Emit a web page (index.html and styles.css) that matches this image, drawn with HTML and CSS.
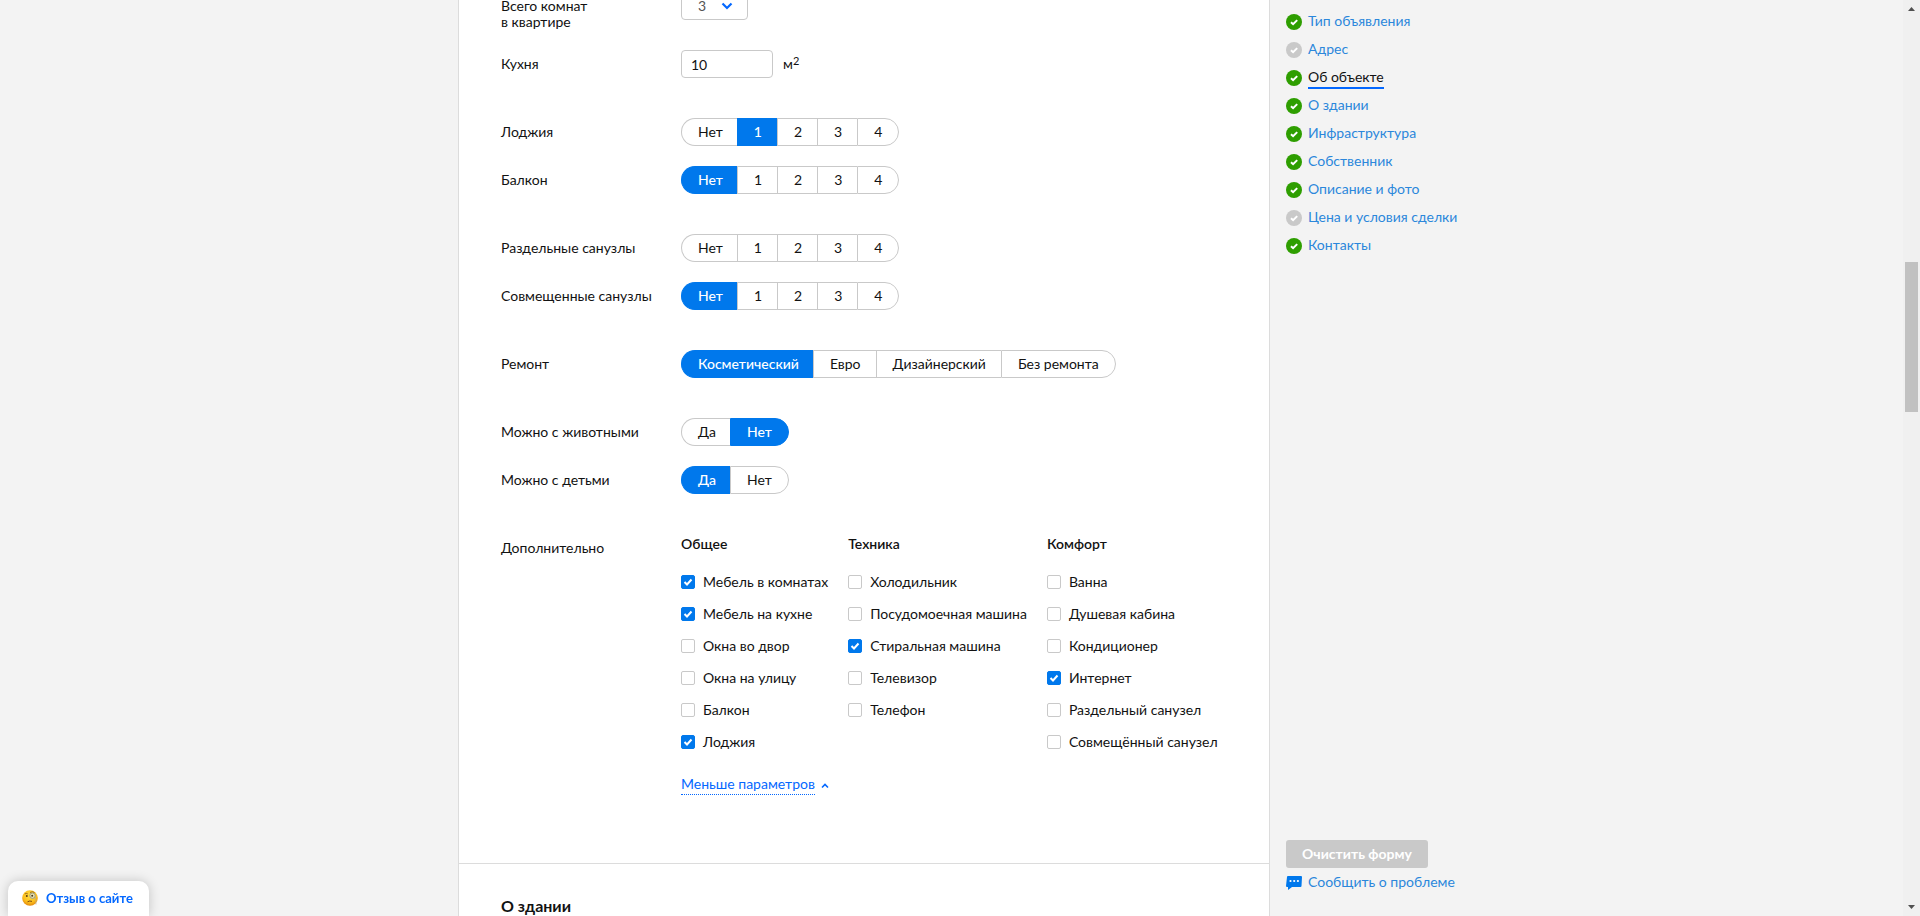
FILE: index.html
```html
<!DOCTYPE html>
<html lang="ru">
<head>
<meta charset="utf-8">
<title>Новое объявление</title>
<link rel="stylesheet" href="styles.css">
</head>
<body>
<svg class="sprite" aria-hidden="true">
  <symbol id="check" viewBox="0 0 16 16">
    <circle cx="8" cy="8" r="8"/>
    <path d="M5 8.2l2.1 2L11.2 6.1" fill="none" stroke="#fff" stroke-width="2"/>
  </symbol>
</svg>
<div class="window">
  <div class="page">
    <main class="form">
      <form class="section" id="object">
        <div class="group">
          <div class="row">
            <label class="row-label" for="rooms">Всего комнат<br>в квартире</label>
            <div class="select-wrap">
              <select class="select" id="rooms"><option>1</option><option>2</option><option selected>3</option><option>4</option></select>
              <svg class="select-arrow" viewBox="0 0 12 8"><path d="M1.500 1.500L6 6l4.500-4.500" fill="none" stroke="#0468ff" stroke-width="2.200"/></svg>
            </div>
          </div>
          <div class="row">
            <label class="row-label" for="kitchen">Кухня</label>
            <div class="measure"><input class="input" id="kitchen" type="text" value="10"><span>м<sup>2</sup></span></div>
          </div>
        </div>
        <div class="group">
          <div class="row">
            <span class="row-label" id="l-loggia">Лоджия</span>
            <div class="pills" role="radiogroup" aria-labelledby="l-loggia">
              <label><input type="radio" name="loggia">Нет</label><label><input type="radio" name="loggia" checked>1</label><label><input type="radio" name="loggia">2</label><label><input type="radio" name="loggia">3</label><label><input type="radio" name="loggia">4</label>
            </div>
          </div>
          <div class="row">
            <span class="row-label" id="l-balcony">Балкон</span>
            <div class="pills" role="radiogroup" aria-labelledby="l-balcony">
              <label><input type="radio" name="balcony" checked>Нет</label><label><input type="radio" name="balcony">1</label><label><input type="radio" name="balcony">2</label><label><input type="radio" name="balcony">3</label><label><input type="radio" name="balcony">4</label>
            </div>
          </div>
        </div>
        <div class="group">
          <div class="row">
            <span class="row-label" id="l-sep">Раздельные санузлы</span>
            <div class="pills" role="radiogroup" aria-labelledby="l-sep">
              <label><input type="radio" name="sep">Нет</label><label><input type="radio" name="sep">1</label><label><input type="radio" name="sep">2</label><label><input type="radio" name="sep">3</label><label><input type="radio" name="sep">4</label>
            </div>
          </div>
          <div class="row">
            <span class="row-label" id="l-comb">Совмещенные санузлы</span>
            <div class="pills" role="radiogroup" aria-labelledby="l-comb">
              <label><input type="radio" name="comb" checked>Нет</label><label><input type="radio" name="comb">1</label><label><input type="radio" name="comb">2</label><label><input type="radio" name="comb">3</label><label><input type="radio" name="comb">4</label>
            </div>
          </div>
        </div>
        <div class="group">
          <div class="row">
            <span class="row-label" id="l-repair">Ремонт</span>
            <div class="pills" role="radiogroup" aria-labelledby="l-repair">
              <label><input type="radio" name="repair" checked>Косметический</label><label><input type="radio" name="repair">Евро</label><label><input type="radio" name="repair">Дизайнерский</label><label><input type="radio" name="repair">Без ремонта</label>
            </div>
          </div>
        </div>
        <div class="group">
          <div class="row">
            <span class="row-label" id="l-pets">Можно с животными</span>
            <div class="pills" role="radiogroup" aria-labelledby="l-pets">
              <label><input type="radio" name="pets">Да</label><label><input type="radio" name="pets" checked>Нет</label>
            </div>
          </div>
          <div class="row">
            <span class="row-label" id="l-kids">Можно с детьми</span>
            <div class="pills" role="radiogroup" aria-labelledby="l-kids">
              <label><input type="radio" name="kids" checked>Да</label><label><input type="radio" name="kids">Нет</label>
            </div>
          </div>
        </div>
        <div class="group">
          <div class="row">
            <span class="row-label">Дополнительно</span>
            <div class="extras">
              <div class="columns">
                <fieldset class="column">
                  <legend>Общее</legend>
                  <label><input type="checkbox" checked>Мебель в комнатах</label>
                  <label><input type="checkbox" checked>Мебель на кухне</label>
                  <label><input type="checkbox">Окна во двор</label>
                  <label><input type="checkbox">Окна на улицу</label>
                  <label><input type="checkbox">Балкон</label>
                  <label><input type="checkbox" checked>Лоджия</label>
                </fieldset>
                <fieldset class="column">
                  <legend>Техника</legend>
                  <label><input type="checkbox">Холодильник</label>
                  <label><input type="checkbox">Посудомоечная машина</label>
                  <label><input type="checkbox" checked>Стиральная машина</label>
                  <label><input type="checkbox">Телевизор</label>
                  <label><input type="checkbox">Телефон</label>
                </fieldset>
                <fieldset class="column">
                  <legend>Комфорт</legend>
                  <label><input type="checkbox">Ванна</label>
                  <label><input type="checkbox">Душевая кабина</label>
                  <label><input type="checkbox">Кондиционер</label>
                  <label><input type="checkbox" checked>Интернет</label>
                  <label><input type="checkbox">Раздельный санузел</label>
                  <label><input type="checkbox">Совмещённый санузел</label>
                </fieldset>
              </div>
              <button class="less" type="button"><span>Меньше параметров</span><svg viewBox="0 0 8 6"><path d="M1 4.500l3-3 3 3" fill="none" stroke="#0468ff" stroke-width="1.600"/></svg></button>
            </div>
          </div>
        </div>
      </form>
      <section class="next" id="building"><h2>О здании</h2></section>
    </main>
    <aside class="sidebar">
      <nav class="steps">
        <a href="#type"><svg class="done"><use href="#check"/></svg><span>Тип объявления</span></a>
        <a href="#address"><svg class="todo"><use href="#check"/></svg><span>Адрес</span></a>
        <a href="#object" class="current"><svg class="done"><use href="#check"/></svg><span>Об объекте</span></a>
        <a href="#building"><svg class="done"><use href="#check"/></svg><span>О здании</span></a>
        <a href="#infra"><svg class="done"><use href="#check"/></svg><span>Инфраструктура</span></a>
        <a href="#owner"><svg class="done"><use href="#check"/></svg><span>Собственник</span></a>
        <a href="#photo"><svg class="done"><use href="#check"/></svg><span>Описание и фото</span></a>
        <a href="#price"><svg class="todo"><use href="#check"/></svg><span>Цена и условия сделки</span></a>
        <a href="#contacts"><svg class="done"><use href="#check"/></svg><span>Контакты</span></a>
      </nav>
      <div class="actions">
        <button class="clear" type="button">Очистить форму</button>
        <a class="report" href="#report"><svg viewBox="0 0 16 16"><path d="M2 2h13a1 1 0 0 1 1 1l-.5 9a1 1 0 0 1-1 1H6l-4 3V13H1a1 1 0 0 1-1-1L1 3a1 1 0 0 1 1-1z" fill="#0078ec"/><g fill="#fff"><circle cx="4.500" cy="7" r="1.100"/><circle cx="8.200" cy="7" r="1.100"/><circle cx="11.900" cy="7" r="1.100"/></g></svg><span>Сообщить о проблеме</span></a>
      </div>
    </aside>
  </div>
  <div class="scrollbar" aria-hidden="true">
    <svg viewBox="0 0 17 17"><path d="M5 11h7L8.500 7z" fill="#505050"/></svg>
    <div class="thumb"></div>
    <svg viewBox="0 0 17 17"><path d="M5 6h7L8.500 10z" fill="#505050"/></svg>
  </div>
</div>
<button class="feedback" type="button">
  <svg viewBox="0 0 16 16">
    <defs><radialGradient id="face" cx=".5" cy=".35" r=".65"><stop offset="0" stop-color="#ffe04a"/><stop offset=".65" stop-color="#fcbf1c"/><stop offset="1" stop-color="#e2870c"/></radialGradient></defs>
    <circle cx="8" cy="8" r="7.800" fill="url(#face)"/>
    <circle cx="4.800" cy="6" r="1" fill="#5a3a12"/>
    <path d="M2.800 3.900q1.500-1 3 0M8 2.500q2.500-1.500 4.500 0" fill="none" stroke="#8a5a12" stroke-width=".8"/>
    <circle cx="10.500" cy="5.700" r="2.700" fill="#e8ebdc" fill-opacity=".7" stroke="#8f9388" stroke-width=".9"/>
    <circle cx="10.200" cy="5.800" r="1" fill="#4a3a20"/>
    <path d="M13.200 6.500q1 4 .8 8" fill="none" stroke="#b9ad8c" stroke-width=".7"/>
    <path d="M5.500 11.800q2.200-1.400 4.500-.4" fill="none" stroke="#7a4510" stroke-width="1"/>
  </svg>
  <span>Отзыв о сайте</span>
</button>
</body>
</html>
```
FILE: styles.css
```css
* { box-sizing: border-box; }

body {
  margin: 0;
  background: #f3f3f3;
  color: #121212;
  font: 14px/16px Lato, "Noto Sans", sans-serif;
}

button, input, select { font: inherit; color: inherit; }
.sprite { display: none; }

.window { display: flex; height: 100vh; overflow: hidden; }

.page {
  flex: 1;
  display: flex;
  justify-content: center;
  min-width: 0;
}

.form {
  width: 812px;
  background: #fff;
  border: solid #dcdcdc;
  border-width: 0 1px;
}

/* The form is scrolled: its first row is partly above the window */
.section {
  display: flex;
  flex-direction: column;
  gap: 40px;
  margin-top: -8px;
  padding: 0 40px 68px 42px;
}

.group { display: flex; flex-direction: column; gap: 20px; }
.row { display: flex; align-items: flex-start; }
.row-label { flex: none; width: 180px; padding-top: 6px; }

.select-wrap { position: relative; }
.select {
  appearance: none;
  display: block;
  width: 67px;
  height: 28px;
  padding: 0 16px;
  border: 1px solid #c9c9c9;
  border-radius: 4px;
  background: #fff;
  color: #555;
}
.select-arrow {
  position: absolute;
  top: 10px;
  right: 15px;
  width: 12px;
  height: 8px;
  pointer-events: none;
}

.measure { display: flex; align-items: center; gap: 10px; }
.measure sup { font-size: 11px; line-height: 0; vertical-align: 4px; }
.input {
  width: 92px;
  height: 28px;
  padding: 0 9px;
  border: 1px solid #c9c9c9;
  border-radius: 4px;
}

.pills { display: flex; }
.pills label {
  height: 28px;
  padding: 0 15px 0 16px;
  border: 1px solid #c9c9c9;
  border-right-width: 0;
  line-height: 26px;
  cursor: pointer;
}
.pills label:first-child {
  padding-right: 14px;
  border-radius: 14px 0 0 14px;
}
.pills label:last-child {
  padding-right: 16px;
  border-right-width: 1px;
  border-radius: 0 14px 14px 0;
}
.pills label:has(:checked) {
  background: #0078ec;
  border-color: #0078ec;
  color: #fff;
  font-weight: 500;
}
.pills input {
  appearance: none;
  position: absolute;
  margin: 0;
}

.extras { padding-top: 2px; }
.columns { display: flex; gap: 20px; }
.column {
  display: flex;
  flex-direction: column;
  gap: 16px;
  min-width: 0;
  margin: 0;
  padding: 0;
  border: 0;
  white-space: nowrap;
}
.column legend { padding: 0; margin-bottom: 22px; font-weight: 600; }
.column label { display: flex; align-items: center; gap: 8px; cursor: pointer; }
.column input {
  appearance: none;
  width: 14px;
  height: 14px;
  margin: 0;
  border: 1px solid #c9c9c9;
  border-radius: 2px;
  background: #fff;
}
.column input:checked {
  border-color: #0078ec;
  background: #0078ec url("data:image/svg+xml,%3Csvg xmlns='http://www.w3.org/2000/svg' viewBox='0 0 12 12'%3E%3Cpath d='M2.500 6l2.500 2.500 4.500-5' fill='none' stroke='%23fff' stroke-width='2'/%3E%3C/svg%3E") center / 12px no-repeat;
}

.less {
  display: flex;
  align-items: center;
  gap: 6px;
  margin-top: 26px;
  padding: 0;
  border: 0;
  background: none;
  color: #0468ff;
  cursor: pointer;
}
.less span { padding-bottom: 2px; border-bottom: 1px dotted #0468ff; }
.less svg { width: 8px; height: 6px; }

.next { padding: 32px 42px; border-top: 1px solid #dcdcdc; }
.next h2 { margin: 0; font-size: 16px; line-height: 20px; font-weight: 700; }

.sidebar {
  display: flex;
  flex-direction: column;
  justify-content: space-between;
  width: 175px;
  padding: 12px 0 24px 16px;
  white-space: nowrap;
}
.steps { display: flex; flex-direction: column; align-items: flex-start; gap: 8px; }
.steps a, .report {
  display: flex;
  align-items: center;
  gap: 6px;
  line-height: 20px;
  color: #2b87db;
  text-decoration: none;
}
.sidebar svg { flex: none; width: 16px; height: 16px; }
.done { fill: #2e9e00; }
.todo { fill: #c9c9c9; }
.steps span { padding-bottom: 2px; line-height: 18px; }
.steps .current { color: #121212; }
.steps .current span { margin-bottom: -1px; padding-bottom: 1px; border-bottom: 2px solid #0468ff; }

.actions { display: flex; flex-direction: column; align-items: flex-start; gap: 4px; }
.clear {
  height: 28px;
  padding: 0 16px;
  border: 0;
  border-radius: 3px;
  background: #c9c9c9;
  color: #fff;
  font-weight: 700;
}

.scrollbar {
  display: flex;
  flex-direction: column;
  width: 17px;
  background: #f0f0f0;
}
.scrollbar svg { width: 17px; height: 17px; }
.scrollbar svg:last-child { margin-top: auto; }
.thumb { height: 150px; margin: 245px 2px 0; background: #c1c1c1; }

.feedback {
  position: fixed;
  left: 8px;
  bottom: 0;
  display: flex;
  align-items: center;
  gap: 8px;
  height: 35px;
  padding: 0 16px 2px 14px;
  border: 0;
  border-radius: 10px 10px 0 0;
  background: #fff;
  box-shadow: 0 0 12px rgba(0, 0, 0, .2);
  color: #0468ff;
  font-size: 13px;
  font-weight: 700;
}
.feedback svg { width: 16px; height: 16px; }
```
